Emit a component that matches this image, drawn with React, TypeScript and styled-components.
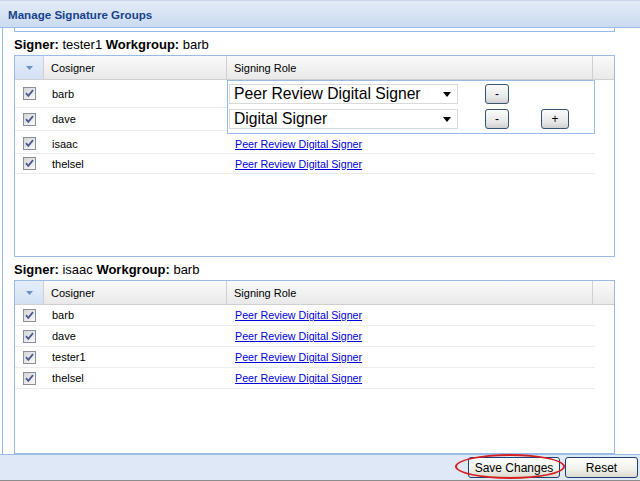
import React from 'react';
import styled, { createGlobalStyle } from 'styled-components';

const GlobalStyle = createGlobalStyle`
  html, body {
    margin: 0;
    padding: 0;
    background: #ffffff;
  }
  body {
    font-family: "Liberation Sans", Arial, sans-serif;
    font-size: 11px;
    color: #000;
  }
`;

interface Cosigner {
  name: string;
  role: string;
}

const ROLE = 'Peer Review Digital Signer';

const firstGroupRest: Cosigner[] = [
  { name: 'isaac', role: ROLE },
  { name: 'thelsel', role: ROLE },
];

const secondGroup: Cosigner[] = [
  { name: 'barb', role: ROLE },
  { name: 'dave', role: ROLE },
  { name: 'tester1', role: ROLE },
  { name: 'thelsel', role: ROLE },
];

export default function App(): React.ReactElement {
  return (
    <Window>
      <GlobalStyle />
      <TitleBar>
        <Title>Manage Signature Groups</Title>
      </TitleBar>
      <Body>
        <Stub />
        <SignerLabel>
          <b>Signer:</b> tester1 <b>Workgroup:</b> barb
        </SignerLabel>
        <Grid $height={200}>
          <GridHeader />
          <EditBlock>
            <EditNames>
              <Row $height={28} $width={213}>
                <CheckCell>
                  <CheckBox />
                </CheckCell>
                <NameCell>barb</NameCell>
              </Row>
              <Row $height={23} $width={213}>
                <CheckCell>
                  <CheckBox />
                </CheckCell>
                <NameCell>dave</NameCell>
              </Row>
            </EditNames>
            <Editor>
              <EditorLine>
                <SelectBox>
                  <span>Peer Review Digital Signer</span>
                  <Arrow />
                </SelectBox>
                <SmallButton>-</SmallButton>
              </EditorLine>
              <EditorLine>
                <SelectBox>
                  <span>Digital Signer</span>
                  <Arrow />
                </SelectBox>
                <SmallButton>-</SmallButton>
                <SmallButton $wide>+</SmallButton>
              </EditorLine>
            </Editor>
          </EditBlock>
          {firstGroupRest.map((c) => (
            <DataRow key={c.name} cosigner={c} height={20} />
          ))}
        </Grid>
        <SignerLabel>
          <b>Signer:</b> isaac <b>Workgroup:</b> barb
        </SignerLabel>
        <Grid $fill>
          <GridHeader />
          {secondGroup.map((c) => (
            <DataRow key={c.name} cosigner={c} height={21} />
          ))}
        </Grid>
      </Body>
      <Footer>
        <Marked>
          <FooterButton $width={92}>Save Changes</FooterButton>
          <Ellipse />
        </Marked>
        <FooterButton $width={73}>Reset</FooterButton>
      </Footer>
    </Window>
  );
}

function GridHeader(): React.ReactElement {
  return (
    <Header>
      <HeaderCheck>
        <svg width="7" height="4" viewBox="0 0 7 4">
          <path d="M0 0 H7 L3.5 4 Z" fill="#6d8fc5" />
        </svg>
      </HeaderCheck>
      <HeaderCell $width={184}>Cosigner</HeaderCell>
      <HeaderCell $width={367}>Signing Role</HeaderCell>
      <HeaderFill />
    </Header>
  );
}

function DataRow({ cosigner, height }: { cosigner: Cosigner; height: number }): React.ReactElement {
  return (
    <Row $height={height} $width={580}>
      <CheckCell>
        <CheckBox />
      </CheckCell>
      <NameCell>{cosigner.name}</NameCell>
      <RoleCell>
        <RoleLink href="#">{cosigner.role}</RoleLink>
      </RoleCell>
    </Row>
  );
}

function CheckBox(): React.ReactElement {
  return (
    <svg width="13" height="13" viewBox="0 0 13 13">
      <defs>
        <linearGradient id="cbg" x1="0" y1="0" x2="1" y2="1">
          <stop offset="0" stopColor="#d4d4d4" />
          <stop offset="1" stopColor="#fbfbfb" />
        </linearGradient>
      </defs>
      <rect x="0.5" y="0.5" width="12" height="12" fill="url(#cbg)" stroke="#8a8f9c" />
      <path d="M3 6.2 L5.3 8.8 L10 3.2" fill="none" stroke="#4a5a92" strokeWidth="1.8" />
    </svg>
  );
}

const Window = styled.div`
  width: 640px;
  height: 481px;
  display: flex;
  flex-direction: column;
  overflow: hidden;
`;

const TitleBar = styled.div`
  height: 26px;
  display: flex;
  align-items: center;
  padding-left: 8px;
  border-top: 1px solid #c8d7ec;
  border-bottom: 1px solid #99bbe8;
  background: linear-gradient(to bottom, #e3ebf7, #cbdbf0);
`;

const Title = styled.span`
  font-family: "Liberation Sans", Arial, sans-serif;
  font-size: 11.6px;
  font-weight: bold;
  color: #15428b;
  margin-top: 1px;
`;

const Body = styled.div`
  flex: 1;
  display: flex;
  flex-direction: column;
  margin-left: 2px;
  border-left: 1px solid #99bbe8;
  padding-left: 11px;
  min-height: 0;
`;

const Stub = styled.div`
  width: 599px;
  height: 3px;
  border: 1px solid #99bbe8;
  border-top: none;
`;

const SignerLabel = styled.div`
  height: 16px;
  line-height: 16px;
  margin: 5px 0 2px;
  font-size: 13px;
  color: #000;
  white-space: nowrap;
`;

const Grid = styled.div<{ $height?: number; $fill?: boolean }>`
  width: 599px;
  border: 1px solid #99bbe8;
  ${({ $height }) => ($height ? `height: ${$height}px;` : '')}
  ${({ $fill }) => ($fill ? 'flex: 1;' : '')}
  display: flex;
  flex-direction: column;
  background: #fff;
`;

const Header = styled.div`
  display: flex;
  height: 23px;
  border-bottom: 1px solid #d0d0d0;
  background: linear-gradient(to bottom, #fafafa, #e9e9e9);
`;

const HeaderCheck = styled.div`
  width: 28px;
  display: flex;
  align-items: center;
  justify-content: center;
  border-right: 1px solid #d0d0d0;
  background: linear-gradient(to bottom, #e6eefa, #d3e1f4);
`;

const HeaderCell = styled.div<{ $width: number }>`
  width: ${({ $width }) => $width - 1}px;
  border-right: 1px solid #d0d0d0;
  padding-left: 7px;
  box-sizing: border-box;
  display: flex;
  align-items: center;
  font-size: 11px;
  color: #000;
`;

const HeaderFill = styled.div`
  flex: 1;
`;

const Row = styled.div<{ $height: number; $width: number }>`
  display: flex;
  align-items: center;
  height: ${({ $height }) => $height - 1}px;
  width: ${({ $width }) => $width}px;
  border-bottom: 1px solid #ececec;
`;

const CheckCell = styled.div`
  width: 29px;
  display: flex;
  justify-content: center;
  padding-right: 1px;
  box-sizing: border-box;
`;

const NameCell = styled.div`
  width: 184px;
  padding-left: 8px;
  box-sizing: border-box;
  font-size: 11px;
`;

const RoleCell = styled.div`
  padding-left: 7px;
`;

const RoleLink = styled.a`
  color: #0000dd;
  text-decoration: underline;
  font-size: 10.7px;
`;

const EditBlock = styled.div`
  display: flex;
  width: 580px;
`;

const EditNames = styled.div`
  display: flex;
  flex-direction: column;
`;

const Editor = styled.div`
  width: 365px;
  height: 49px;
  border: 1px solid #99bbe8;
  padding: 3px 0 0 1px;
  box-sizing: content-box;
  display: flex;
  flex-direction: column;
  gap: 5px;
  margin-left: -1px;
`;

const EditorLine = styled.div`
  display: flex;
  align-items: center;
  height: 20px;
`;

const SelectBox = styled.div`
  flex-shrink: 0;
  width: 229px;
  height: 20px;
  box-sizing: border-box;
  border: 1px solid #dadada;
  background: #fff;
  display: flex;
  align-items: center;
  justify-content: space-between;
  padding: 0 6px 0 4px;
  font-size: 15.7px;
  color: #000;
  margin-right: 27px;
  white-space: nowrap;
`;

const Arrow = styled.span`
  width: 0;
  height: 0;
  border-left: 4px solid transparent;
  border-right: 4px solid transparent;
  border-top: 5px solid #000;
`;

const SmallButton = styled.div<{ $wide?: boolean }>`
  flex-shrink: 0;
  width: ${({ $wide }) => ($wide ? 28 : 24)}px;
  height: 20px;
  box-sizing: border-box;
  border: 1px solid #3a5476;
  border-radius: 3px;
  background: linear-gradient(to bottom, #fbfbfb, #e6e6e6 70%, #cfcfcf);
  display: flex;
  align-items: center;
  justify-content: center;
  font-size: 12px;
  color: #000;

  & + & {
    margin-left: 32px;
  }
`;

const Footer = styled.div`
  height: 25px;
  border-top: 1px solid #99bbe8;
  border-bottom: 1px solid #8c8c8c;
  background: #dfe8f6;
  display: flex;
  align-items: center;
  justify-content: flex-end;
  gap: 5px;
  padding-right: 2px;
`;

const Marked = styled.div`
  position: relative;
  display: flex;
`;

const FooterButton = styled.div<{ $width: number }>`
  width: ${({ $width }) => $width}px;
  height: 21px;
  box-sizing: border-box;
  border: 1px solid #1d3f73;
  border-radius: 3px;
  background: linear-gradient(to bottom, #ffffff, #f0f0ea 60%, #dcdcd2);
  display: flex;
  align-items: center;
  justify-content: center;
  font-size: 12px;
  color: #000;
`;

const Ellipse = styled.div`
  position: absolute;
  left: -13px;
  top: -3px;
  width: 110px;
  height: 25px;
  border: 2px solid #d42020;
  border-radius: 50%;
  box-sizing: border-box;
  pointer-events: none;
`;
